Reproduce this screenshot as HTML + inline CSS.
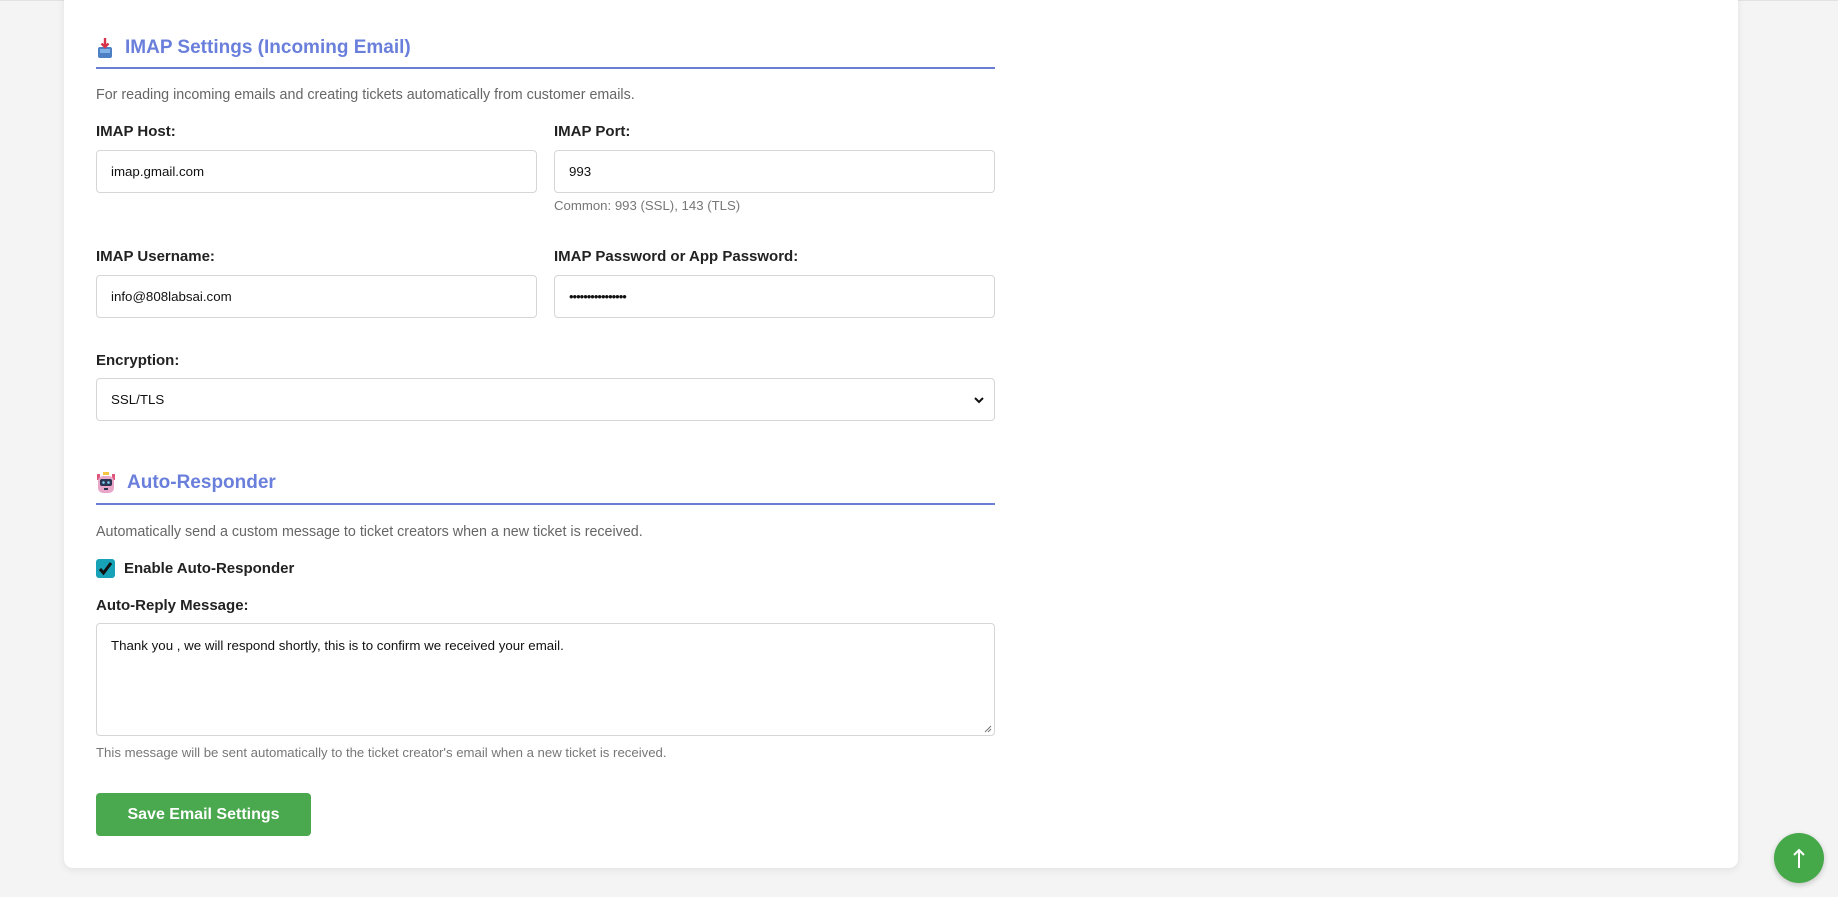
<!DOCTYPE html>
<html><head><meta charset="utf-8"><style>
*{box-sizing:border-box}
body{margin:0;width:1838px;height:897px;background:#f4f4f4;font-family:"Liberation Sans",sans-serif;position:relative;overflow:hidden;border-top:1px solid #e2e2e2}
.card{position:absolute;left:64px;top:-10px;width:1674px;height:877px;background:#fff;border-radius:9px;box-shadow:0 2px 8px rgba(0,0,0,0.08)}
.a{position:absolute;left:96px}
h2{position:absolute;left:96px;margin:0;font-size:19px;font-weight:700;color:#6a7fdb;display:flex;align-items:center;gap:11px;height:26px}
.line{position:absolute;left:96px;width:899px;height:2px;background:#6a7fd3}
.desc{position:absolute;font-size:14.3px;color:#666;line-height:16px}
.lbl{position:absolute;font-size:15px;font-weight:700;color:#222;line-height:18px}
.inp{position:absolute;height:43px;border:1px solid #d6d6d6;border-radius:4px;font-size:13.3px;color:#111;padding-left:14px;display:flex;align-items:center;background:#fff}
.hint{position:absolute;font-size:13.2px;color:#777;line-height:15px}
</style></head><body>
<div class="card"></div>

<h2 style="top:34px"><svg width="18" height="22" viewBox="0 0 18 22"><rect x="2" y="10" width="14" height="11" rx="2" fill="#4d7fc4"/><rect x="4" y="12" width="10" height="4" fill="#7fb0e6"/><path d="M9 1v9M5.5 6.5L9 10l3.5-3.5" stroke="#d6334a" stroke-width="2.4" fill="none"/></svg>IMAP Settings (Incoming Email)</h2>
<div class="line" style="top:66px"></div>
<div class="desc a" style="top:86px">For reading incoming emails and creating tickets automatically from customer emails.</div>

<div class="lbl" style="left:96px;top:122px">IMAP Host:</div>
<div class="lbl" style="left:554px;top:122px">IMAP Port:</div>
<div class="inp" style="left:96px;top:149px;width:441px">imap.gmail.com</div>
<div class="inp" style="left:554px;top:149px;width:441px">993</div>
<div class="hint" style="left:554px;top:197px">Common: 993 (SSL), 143 (TLS)</div>

<div class="lbl" style="left:96px;top:247px">IMAP Username:</div>
<div class="lbl" style="left:554px;top:247px">IMAP Password or App Password:</div>
<div class="inp" style="left:96px;top:274px;width:441px">info@808labsai.com</div>
<div class="inp" style="left:554px;top:274px;width:441px;letter-spacing:-1px;font-size:13px">••••••••••••••••</div>

<div class="lbl" style="left:96px;top:351px">Encryption:</div>
<div class="inp" style="left:96px;top:377px;width:899px">SSL/TLS<svg style="position:absolute;right:10px;top:17px" width="10" height="8" viewBox="0 0 10 8"><path d="M1 2l4 4 4-4" stroke="#111" stroke-width="2" fill="none"/></svg></div>

<h2 style="top:469px"><svg width="20" height="22" viewBox="0 0 20 22"><rect x="7" y="0" width="6" height="3" fill="#f5c542"/><rect x="1" y="2" width="3" height="6" fill="#e0557a"/><rect x="16" y="2" width="3" height="6" fill="#e0557a"/><rect x="2" y="4" width="16" height="17" rx="5" fill="#e8a7c9"/><rect x="4" y="7" width="12" height="7" rx="2" fill="#2b3550"/><circle cx="7.5" cy="10.5" r="1.3" fill="#7fd3ff"/><circle cx="12.5" cy="10.5" r="1.3" fill="#7fd3ff"/><rect x="8" y="16" width="4" height="2" fill="#2b3550"/></svg>Auto-Responder</h2>
<div class="line" style="top:502px"></div>
<div class="desc a" style="top:523px">Automatically send a custom message to ticket creators when a new ticket is received.</div>

<div style="position:absolute;left:96px;top:558px;width:19px;height:19px;background:#17a2b8;border-radius:3px"><svg width="19" height="19" viewBox="0 0 19 19"><path d="M4 10l3.5 4L15 4" stroke="#111" stroke-width="3" fill="none"/></svg></div>
<div class="lbl" style="left:124px;top:559px">Enable Auto-Responder</div>

<div class="lbl" style="left:96px;top:596px">Auto-Reply Message:</div>
<div class="inp" style="left:96px;top:622px;width:899px;height:113px;align-items:flex-start;padding-top:14px;font-size:13.3px">Thank you , we will respond shortly, this is to confirm we received your email.<svg style="position:absolute;right:2px;bottom:2px" width="8" height="8" viewBox="0 0 8 8"><path d="M7 1L1 7M7 4L4 7" stroke="#777" stroke-width="1"/></svg></div>
<div class="hint" style="left:96px;top:744px">This message will be sent automatically to the ticket creator's email when a new ticket is received.</div>

<div style="position:absolute;left:96px;top:792px;width:215px;height:43px;background:#4aa84e;border-radius:4px;color:#fff;font-weight:700;font-size:16px;display:flex;align-items:center;justify-content:center">Save Email Settings</div>

<div style="position:absolute;left:1774px;top:832px;width:50px;height:50px;border-radius:50%;background:#45a849;box-shadow:0 2px 6px rgba(0,0,0,0.2);display:flex;align-items:center;justify-content:center"><svg width="14" height="22" viewBox="0 0 14 22"><path d="M7 21V3M2 8l5-5 5 5" stroke="#fff" stroke-width="2" fill="none"/></svg></div>
</body></html>
